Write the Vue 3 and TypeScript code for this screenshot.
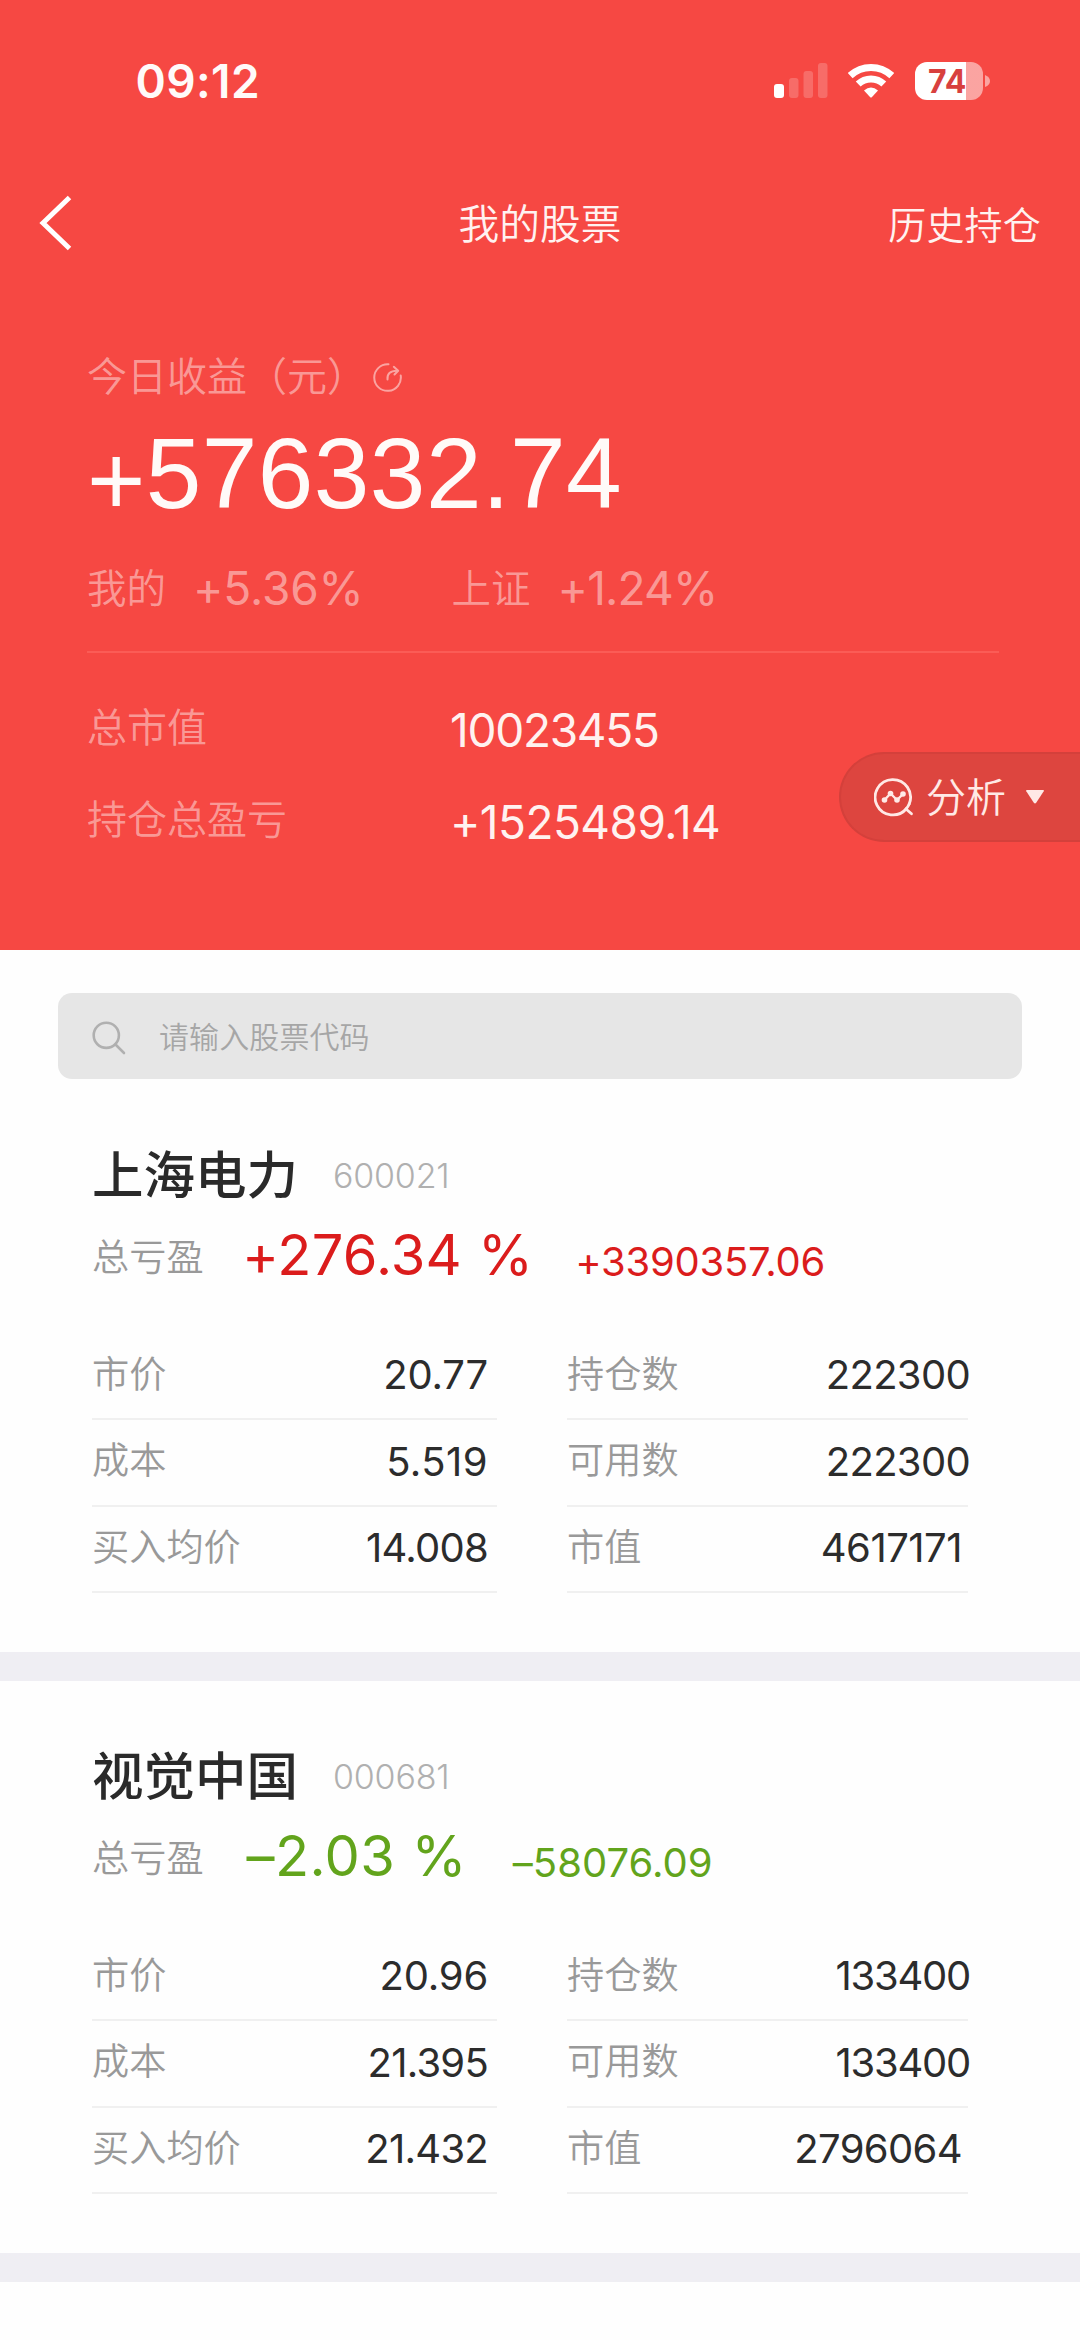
<script setup lang="ts">
interface Figure {
  text: string
  spacing: number
}

interface Cell {
  label: string
  value: Figure
}

interface Holding {
  name: string
  code: Figure
  trend: 'up' | 'down'
  percent: Figure
  amount: Figure
  left: Cell[]
  right: Cell[]
}

const track = (f: Figure) => ({ letterSpacing: `${f.spacing}px` })
const fig = (text: string, spacing = 0): Figure => ({ text, spacing })

const today = { sign: '+', value: '576332.74' }

const returns = [
  { label: '我的', value: fig('+5.36%', -0.1) },
  { label: '上证', value: fig('+1.24%', -0.8) },
]

const totals = [
  { label: '总市值', value: fig('10023455', -1.27) },
  { label: '持仓总盈亏', value: fig('+1525489.14', -0.56) },
]

const holdings: Holding[] = [
  {
    name: '上海电力',
    code: fig('600021', -0.2),
    trend: 'up',
    percent: fig('+276.34 %', 0.24),
    amount: fig('+3390357.06', -0.25),
    left: [
      { label: '市价', value: fig('20.77', -0.2) },
      { label: '成本', value: fig('5.519', 0.45) },
      { label: '买入均价', value: fig('14.008', -0.75) },
    ],
    right: [
      { label: '持仓数', value: fig('222300', -0.68) },
      { label: '可用数', value: fig('222300', -0.68) },
      { label: '市值', value: fig('4617171', -0.5) },
    ],
  },
  {
    name: '视觉中国',
    code: fig('000681', -0.2),
    trend: 'down',
    percent: fig('–2.03 %', 0.39),
    amount: fig('–58076.09', 0.03),
    left: [
      { label: '市价', value: fig('20.96', -0.2) },
      { label: '成本', value: fig('21.395', -0.75) },
      { label: '买入均价', value: fig('21.432', -0.75) },
    ],
    right: [
      { label: '持仓数', value: fig('133400', -1.25) },
      { label: '可用数', value: fig('133400', -1.25) },
      { label: '市值', value: fig('2796064', -0.63) },
    ],
  },
]
</script>

<template>
  <main class="page">
    <header class="hero">
      <div class="status">
        <span class="clock">09:12</span>
        <div class="indicators">
          <svg class="signal" width="54" height="35" viewBox="0 0 54 35">
            <rect x="0" y="21" width="10" height="14" rx="3" fill="#fff" />
            <rect x="15" y="15" width="9.5" height="20" rx="3" fill="#fff" opacity=".2" />
            <rect x="29.5" y="8" width="9.5" height="27" rx="3" fill="#fff" opacity=".2" />
            <rect x="44" y="0" width="9.5" height="35" rx="3" fill="#fff" opacity=".2" />
          </svg>
          <svg class="wifi" width="46" height="36" viewBox="0 0 46 36" fill="none" stroke="#fff" stroke-width="7">
            <path d="M2.2 12.6a30.5 30.5 0 0 1 41.6 0" />
            <path d="M10.2 21a18.6 18.6 0 0 1 25.6 0" />
            <path d="M16 27.6q7-6 14 0l-6 6.4q-1 1-2 0z" fill="#fff" stroke="none" />
          </svg>
          <div class="battery">
            <div class="cell"><span>74</span></div>
            <svg class="nub" width="5" height="12" viewBox="0 0 5 12"><path d="M0 0q5 2 5 6t-5 6z" fill="#fff" opacity=".5" /></svg>
          </div>
        </div>
      </div>

      <nav class="nav">
        <svg class="back" width="34" height="58" viewBox="0 0 34 58" fill="none" stroke="#fff" stroke-width="5">
          <path d="M30.5 3.500 4 29l26.500 25.500" />
        </svg>
        <h1 class="title">我的股票</h1>
        <a class="history">历史持仓</a>
      </nav>

      <section class="summary">
        <div class="caption">
          <span>今日收益（元）</span>
          <svg class="refresh" width="32" height="32" viewBox="0 0 32 32" fill="none" stroke="#fff" stroke-width="2" stroke-linecap="round" stroke-linejoin="round">
            <path d="M16.500 2.300A13.300 13.300 0 1 0 28.700 13.500" />
            <path d="M15.500 17.500C15 12 18 8.700 25 8.700" />
            <path d="M21.800 4.800 26.200 8.700 22.500 12.500" />
          </svg>
        </div>
        <div class="today"><span class="sign">{{ today.sign }}</span>{{ today.value }}</div>
        <div class="returns">
          <div v-for="r in returns" :key="r.label" class="return">
            <span>{{ r.label }}</span>
            <span class="rate" :style="track(r.value)">{{ r.value.text }}</span>
          </div>
        </div>
        <dl class="totals">
          <div v-for="t in totals" :key="t.label" class="total">
            <dt>{{ t.label }}</dt>
            <dd :style="track(t.value)">{{ t.value.text }}</dd>
          </div>
        </dl>
      </section>

      <button class="analyse" type="button">
        <svg width="40" height="40" viewBox="0 0 40 40" fill="none" stroke="#ffe9e6" stroke-width="2.800" stroke-linecap="round" stroke-linejoin="round">
          <path d="M32.500 31.500A17.700 17.700 0 1 1 35.200 27" />
          <path d="M35.200 27A17.700 17.700 0 0 1 32 32L37.500 36.800" />
          <path d="m10.500 23 6-6.500 6.500 6.500 6-6" stroke-width="2.400" />
          <g fill="#ffe9e6" stroke="none">
            <circle cx="10.500" cy="23" r="2.800" />
            <circle cx="16.500" cy="16.500" r="2.800" />
            <circle cx="23" cy="23" r="2.800" />
            <circle cx="29" cy="17" r="2.800" />
          </g>
        </svg>
        <span>分析</span>
        <svg class="caret" width="20" height="16" viewBox="0 0 20 16"><path d="M2 1h16q1.500 0 .7 1.300l-7.500 11.500q-1.200 1.400-2.400 0L1.300 2.300Q.5 1 2 1z" fill="#ffe9e6" /></svg>
      </button>
    </header>

    <div class="search">
      <svg width="34" height="34" viewBox="0 0 34 34" fill="none" stroke="#b0b0b0" stroke-width="2.600" stroke-linecap="round">
        <circle cx="14.300" cy="14.300" r="12.600" />
        <path d="m23.500 23.500 8.500 8.500" />
      </svg>
      <span>请输入股票代码</span>
    </div>

    <article v-for="h in holdings" :key="h.code.text" class="holding">
      <div class="heading">
        <h2>{{ h.name }}</h2>
        <span class="code" :style="track(h.code)">{{ h.code.text }}</span>
      </div>
      <div class="profit" :class="h.trend">
        <span class="label">总亏盈</span>
        <span class="percent" :style="track(h.percent)">{{ h.percent.text }}</span>
        <span class="amount" :style="track(h.amount)">{{ h.amount.text }}</span>
      </div>
      <div class="columns">
        <div class="column">
          <div v-for="c in h.left" :key="c.label" class="cellrow">
            <span class="label">{{ c.label }}</span>
            <span class="value" :style="track(c.value)">{{ c.value.text }}</span>
          </div>
        </div>
        <div class="column second">
          <div v-for="c in h.right" :key="c.label" class="cellrow">
            <span class="label">{{ c.label }}</span>
            <span class="value" :style="track(c.value)">{{ c.value.text }}</span>
          </div>
        </div>
      </div>
    </article>
  </main>
</template>

<style>
body {
  background: #fefefe;
}
</style>

<style scoped>
.page {
  width: 1080px;
  height: 2340px;
  overflow: hidden;
  background: #fefefe;
  font-family: Inter, "Noto Sans CJK SC", sans-serif;
  font-weight: 350;
  white-space: nowrap;
  line-height: 50px;
}

.hero {
  position: relative;
  height: 950px;
  background: #f64843;
  color: #fff2f0;
}

.status {
  display: flex;
  justify-content: space-between;
  align-items: center;
  height: 161px;
  padding: 0 90px 0 135.400px;
}

.clock {
  font-size: 46px;
  font-weight: 600;
  letter-spacing: 0.400px;
  color: #fffaf9;
}

.indicators {
  display: flex;
  align-items: center;
}

.signal {
  margin-right: 20px;
}

.wifi {
  margin-right: 21px;
}

.battery {
  display: flex;
  align-items: center;
}

.cell {
  width: 68px;
  height: 38px;
  box-sizing: border-box;
  padding-left: 13px;
  border-radius: 12px;
  background: linear-gradient(90deg, #fff 51px, rgba(255, 255, 255, 0.5) 51px);
  color: #d8403e;
  font-size: 32px;
  font-weight: 700;
  line-height: 39px;
}

.nub {
  margin-left: 2px;
}

.nav {
  display: grid;
  grid-template-columns: 200px 1fr 200px;
  align-items: center;
  height: 125px;
  padding: 0 39px 0 39px;
}

.back {
  margin-bottom: 1px;
}

.title {
  margin: 3px 0 0;
  text-align: center;
  font-size: 40.700px;
  font-weight: 350;
}

.history {
  margin-top: 2px;
  text-align: right;
  font-size: 38px;
  letter-spacing: 0.200px;
}

.summary {
  padding: 66px 81px 0 87px;
  font-size: 40px;
  color: rgba(255, 255, 255, 0.46);
}

.caption {
  display: flex;
  align-items: center;
}

.refresh {
  margin: 1px 0 0 5px;
  opacity: 0.5;
}

.today {
  margin-top: 21px;
  color: #fffaf8;
  font-family: "Liberation Sans", sans-serif;
  font-size: 100px;
  font-weight: 400;
  line-height: 100px;
  letter-spacing: 0.400px;
}

.sign {
  line-height: 0;
  vertical-align: -7px;
}

.returns {
  display: flex;
  height: 50px;
  margin-top: 41px;
}

.return {
  display: flex;
  align-items: center;
  width: 364.500px;
  font-size: 39.500px;
}

.rate {
  margin: -3px 0 0 27px;
  font-size: 46px;
  font-weight: 400;
}

.totals {
  display: flex;
  flex-direction: column;
  gap: 42px;
  margin: 37px 0 0;
  padding-top: 50px;
  border-top: 2px solid #fb5c56;
}

.total {
  display: flex;
  align-items: center;
  height: 50px;
}

.total dt {
  width: 363px;
}

.total dd {
  margin: 4px 0 0;
  color: #fff2f0;
  font-size: 46px;
  font-weight: 400;
}

.analyse {
  position: absolute;
  top: 752px;
  right: 0;
  display: flex;
  align-items: center;
  box-sizing: border-box;
  width: 241px;
  height: 90px;
  padding: 0 0 0 33px;
  border: 2px solid #d4403b;
  border-right: 0;
  border-radius: 45px 0 0 45px;
  background: #dd453f;
  color: #ffe9e6;
  font: inherit;
  font-size: 40px;
}

.analyse span {
  margin: 2px 0 0 12px;
}

.caret {
  margin-left: 19px;
}

.search {
  display: flex;
  align-items: center;
  height: 86px;
  margin: 43px 58px 1px;
  padding-left: 34px;
  border-radius: 14px;
  background: #e6e6e6;
  color: #a6a6a6;
  font-size: 30px;
}

.search svg {
  margin-top: 3px;
}

.search span {
  margin: 2px 0 0 33px;
  letter-spacing: 0.100px;
}

.holding {
  box-sizing: border-box;
  height: 601px;
  padding: 64px 112px 0 92px;
  border-bottom: 29px solid #efeef3;
}

.heading,
.profit {
  display: flex;
  align-items: center;
  height: 60px;
}

.heading h2 {
  margin: 2px 0 0;
  color: #2a2a2a;
  font-size: 51.500px;
  font-weight: 500;
}

.code {
  margin: 3px 0 0 35px;
  color: #b0b0b0;
  font-size: 34px;
}

.profit {
  margin-top: 21px;
}

.label {
  margin-top: 2px;
  color: #999;
  font-size: 37.200px;
}

.profit .label {
  margin-top: 6px;
}

.percent {
  margin-left: 38.400px;
  font-size: 56px;
  font-weight: 400;
}

.amount {
  margin: 14px 0 0 42px;
  font-size: 40px;
  font-weight: 400;
}

.up {
  color: #db1c1c;
}

.down {
  color: #62a41c;
}

.down .percent {
  margin-left: 43px;
}

.down .amount {
  margin-left: 46px;
}

.columns {
  display: flex;
  gap: 70px;
  margin-top: 48.500px;
}

.column {
  width: 405px;
}

.second {
  width: 401px;
}

.cellrow {
  display: flex;
  justify-content: space-between;
  align-items: center;
  box-sizing: border-box;
  height: 86.500px;
  padding: 0 9px 4px 0;
  border-bottom: 2px solid #f0f0f0;
}

.value {
  margin-top: 3px;
  color: #2c2c2c;
  font-size: 40px;
  font-weight: 400;
}

.second .cellrow {
  padding-right: 0;
}

.second .value {
  margin-right: -2px;
}

.second .cellrow:last-child .value {
  margin-right: 6px;
}
</style>
